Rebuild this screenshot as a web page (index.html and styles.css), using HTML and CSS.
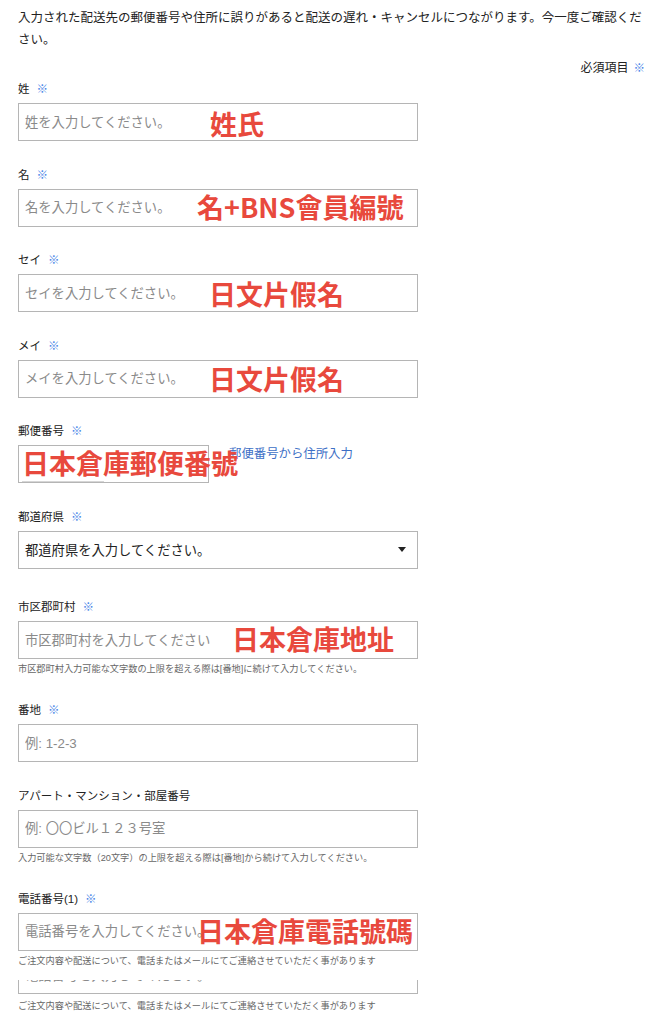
FILE: index.html
```html
<!DOCTYPE html>
<html lang="ja">
<head>
<meta charset="utf-8">
<title>配送先入力</title>
<link rel="stylesheet" href="styles.css">
</head>
<body>
<div class="page">
  <p class="intro">入力された配送先の郵便番号や住所に誤りがあると配送の遅れ・キャンセルにつながります。今一度ご確認ください。</p>
  <div class="req-note">必須項目<span class="req req-top">※</span></div>

  <div class="field field-first">
    <div class="label">姓<span class="req">※</span></div>
    <div class="box-wrap">
      <input class="box" type="text" placeholder="姓を入力してください。">
      <span class="note note-sei">姓氏</span>
    </div>
  </div>

  <div class="field">
    <div class="label">名<span class="req">※</span></div>
    <div class="box-wrap">
      <input class="box" type="text" placeholder="名を入力してください。">
      <span class="note note-mei">名+BNS會員編號</span>
    </div>
  </div>

  <div class="field">
    <div class="label">セイ<span class="req">※</span></div>
    <div class="box-wrap">
      <input class="box" type="text" placeholder="セイを入力してください。">
      <span class="note note-kana1">日文片假名</span>
    </div>
  </div>

  <div class="field">
    <div class="label">メイ<span class="req">※</span></div>
    <div class="box-wrap">
      <input class="box" type="text" placeholder="メイを入力してください。">
      <span class="note note-kana2">日文片假名</span>
    </div>
  </div>

  <div class="field">
    <div class="label">郵便番号<span class="req">※</span></div>
    <div class="zip-row">
      <div class="box-wrap box-wrap-zip">
        <input class="box box-zip" type="text">
        <span class="zip-inner"></span>
        <span class="note note-zip">日本倉庫郵便番號</span>
      </div>
      <a class="zip-link" href="#">郵便番号から住所入力</a>
    </div>
  </div>

  <div class="field field-select">
    <div class="label">都道府県<span class="req">※</span></div>
    <div class="box select">
      <span>都道府県を入力してください。</span>
      <span class="caret"></span>
    </div>
  </div>

  <div class="field field-help">
    <div class="label">市区郡町村<span class="req">※</span></div>
    <div class="box-wrap">
      <input class="box" type="text" placeholder="市区郡町村を入力してください">
      <span class="note note-city">日本倉庫地址</span>
    </div>
    <p class="help">市区郡町村入力可能な文字数の上限を超える際は[番地]に続けて入力してください。</p>
  </div>

  <div class="field">
    <div class="label">番地<span class="req">※</span></div>
    <div class="box-wrap">
      <input class="box" type="text" placeholder="例: 1-2-3">
    </div>
  </div>

  <div class="field field-help">
    <div class="label">アパート・マンション・部屋番号</div>
    <div class="box-wrap">
      <input class="box" type="text" placeholder="例: 〇〇ビル１２３号室">
    </div>
    <p class="help">入力可能な文字数（20文字）の上限を超える際は[番地]から続けて入力してください。</p>
  </div>

  <div class="field field-tel">
    <div class="label">電話番号(1)<span class="req">※</span></div>
    <div class="box-wrap">
      <input class="box" type="text" placeholder="電話番号を入力してください。">
      <span class="note note-tel">日本倉庫電話號碼</span>
    </div>
    <p class="help">ご注文内容や配送について、電話またはメールにてご連絡させていただく事があります</p>
  </div>

  <div class="box-clip"><span class="clip-text">電話番号を入力してください。</span></div>
  <p class="help help-last">ご注文内容や配送について、電話またはメールにてご連絡させていただく事があります</p>
</div>
</body>
</html>
```

FILE: styles.css
```css
html, body {
  margin: 0;
  padding: 0;
  background: #ffffff;
}

body {
  font-family: "Liberation Sans", "Noto Sans CJK JP", sans-serif;
  color: #222222;
}

.page {
  padding: 7px 16px 0 18px;
}

.intro {
  margin: 0;
  font-size: 12.5px;
  line-height: 22px;
  color: #222222;
}

.req-note {
  margin-top: 9px;
  font-size: 12px;
  line-height: 16px;
  text-align: right;
  color: #222222;
}

.req {
  color: #4a86e8;
  margin-left: 7px;
  font-size: 11.5px;
}

.req-top {
  margin-left: 5px;
}

.field {
  margin-bottom: 25.5px;
}

.field-first {
  margin-top: 5px;
}

.field-select {
  margin-bottom: 30.5px;
}

.field-help {
  margin-bottom: 26px;
}

.field-tel {
  margin-bottom: 0;
}

.label {
  font-size: 11.5px;
  line-height: 16px;
  margin-bottom: 6px;
  color: #222222;
}

.box-wrap {
  position: relative;
  width: 400px;
}

.box {
  display: block;
  box-sizing: border-box;
  width: 400px;
  height: 38px;
  margin: 0;
  padding: 0 6px;
  border: 1px solid #b5b5b5;
  border-radius: 0;
  background: #ffffff;
  font-family: "Liberation Sans", "Noto Sans CJK JP", sans-serif;
  font-size: 13.3px;
  color: #222222;
  outline: none;
}

.box::placeholder {
  color: #8a8a8a;
}

.zip-row {
  display: flex;
  align-items: flex-start;
}

.box-wrap-zip {
  width: 191px;
}

.box-zip {
  width: 191px;
}

.zip-inner {
  position: absolute;
  left: 4px;
  bottom: 1px;
  width: 82px;
  height: 1px;
  background: #d6d6d6;
}

.zip-link {
  margin-left: 20px;
  margin-top: 1px;
  font-size: 12.4px;
  line-height: 16px;
  color: #3d6fc6;
  text-decoration: none;
}

.select {
  display: flex;
  align-items: center;
  justify-content: space-between;
  padding-right: 11px;
  color: #222222;
}

.caret {
  width: 0;
  height: 0;
  border-left: 4px solid transparent;
  border-right: 4px solid transparent;
  border-top: 5px solid #222222;
}

.help {
  margin: 4px 0 0;
  font-size: 9.2px;
  line-height: 13px;
  color: #666666;
}

.help-last {
  margin-top: 5.5px;
}

.box-clip {
  box-sizing: border-box;
  width: 400px;
  height: 14.5px;
  margin-top: 12px;
  border: 1px solid #b5b5b5;
  border-top: none;
  overflow: hidden;
}

.clip-text {
  display: block;
  margin-top: -11px;
  padding-left: 6px;
  font-size: 13.3px;
  line-height: 14px;
  color: #8a8a8a;
  white-space: nowrap;
}

.note {
  position: absolute;
  font-family: "Noto Sans CJK TC", "Noto Sans CJK JP", sans-serif;
  font-weight: 700;
  font-size: 27px;
  line-height: 27px;
  color: #e8493d;
  white-space: nowrap;
  pointer-events: none;
}

.note-sei { left: 192px; top: 7px; }
.note-mei { left: 179px; top: 4px; }
.note-kana1 { left: 191px; top: 5.5px; }
.note-kana2 { left: 191px; top: 5.5px; }
.note-zip { left: 4px; top: 4px; }
.note-city { left: 214px; top: 4px; }
.note-tel { left: 179px; top: 4px; }
```
